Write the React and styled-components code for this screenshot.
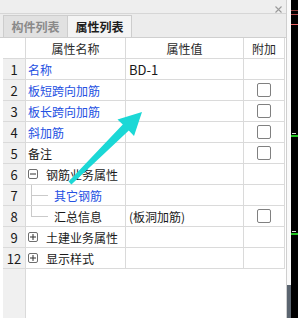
import React from "react";
import styled, { createGlobalStyle } from "styled-components";

const GlobalStyle = createGlobalStyle`
  * { box-sizing: border-box; }
  html, body { margin: 0; padding: 0; background: #fff; }
  body { font-family: "Noto Sans CJK SC", "Noto Sans", sans-serif; color: #1a1a1a; }
`;

const Screen = styled.div`
  position: relative;
  display: flex;
  width: 298px;
  height: 318px;
  overflow: hidden;
`;

const Panel = styled.div`
  width: 287px;
  border-right: 1px solid #cfcfcf;
  display: flex;
  flex-direction: column;
  background: #fff;
`;

const TitleBar = styled.div`
  height: 14px;
  border-bottom: 1px solid #d6d6d6;
  background: #eeeeee;
  display: flex;
  justify-content: flex-end;
  align-items: flex-start;
  padding: 6px 4px 0 0;
`;

const TabStrip = styled.div`
  height: 24px;
  background: #ececec;
  border-bottom: 1px solid #cfcfcf;
  padding: 1px 0 0 3px;
  display: flex;
`;

const Tab = styled.div`
  width: 65px;
  height: 22px;
  margin-left: ${(p) => (p.$active ? "-1px" : "0")};
  border: 1px solid #cdcdcd;
  border-bottom: none;
  background: ${(p) => (p.$active ? "#f4f4f4" : "#e1e1e1")};
  color: ${(p) => (p.$active ? "#1e1e1e" : "#8a8a8a")};
  font-size: 12px;
  font-weight: bold;
  display: flex;
  align-items: center;
  justify-content: center;
`;

const TableArea = styled.div`
  flex: 1;
  display: flex;
  flex-direction: column;
  padding-left: 3px;
`;

const Row = styled.div`
  display: grid;
  grid-template-columns: 23px 100px 118px 41px;
  height: 21px;
`;

const Cell = styled.div`
  border-right: 1px solid #dadada;
  border-bottom: 1px solid #dadada;
  display: flex;
  align-items: center;
  justify-content: ${(p) => (p.$center ? "center" : "flex-start")};
  padding-left: ${(p) => p.$pad || 0}px;
  background: ${(p) => (p.$gray ? "#f0f0f0" : "#fff")};
  color: ${(p) => (p.$blue ? "#2450e2" : "#1a1a1a")};
  font-size: ${(p) => p.$size || 12}px;
  white-space: nowrap;
  overflow: visible;
`;

const HeadCell = styled(Cell)`
  color: #2a2a2a;
`;

const Filler = styled.div`
  flex: 1;
  display: grid;
  grid-template-columns: 23px 1fr;
`;

const NumFill = styled.div`
  background: #f0f0f0;
  border-right: 1px solid #dadada;
`;

const Check = styled.span`
  width: 14px;
  height: 14px;
  border: 1px solid #808080;
  border-radius: 2px;
  background: #fff;
`;

const ToggleBox = styled.span`
  width: 10px;
  height: 10px;
  margin: 0 8px 0 1px;
  border: 1px solid #6e6e6e;
  border-radius: 2px;
  display: flex;
  align-items: center;
  justify-content: center;
  background: #fff;
`;

const Branch = styled.span`
  position: relative;
  width: 30px;
  height: 100%;
  margin-left: -2px;

  &::before {
    content: "";
    position: absolute;
    left: 7px;
    top: 0;
    width: 1px;
    height: ${(p) => (p.$last ? "50%" : "100%")};
    background: #cacaca;
  }
  &::after {
    content: "";
    position: absolute;
    left: 7px;
    top: 50%;
    width: 17px;
    height: 1px;
    background: #cacaca;
  }
`;

const ScrollTrack = styled.div`
  width: 4px;
  display: flex;
  flex-direction: column;
  justify-content: flex-end;
  background: #fafafa;
`;

const Thumb = styled.div`
  height: 33px;
  background: #5b6570;
`;

const DarkStrip = styled.div`
  width: 7px;
  background:
    linear-gradient(#8c3c3c, #8c3c3c) 0 10px / 100% 1px no-repeat,
    linear-gradient(#b04848, #b04848) 0 14px / 100% 1px no-repeat,
    linear-gradient(#f06464, #f06464) 0 24px / 100% 1px no-repeat,
    linear-gradient(#d8d8d8, #d8d8d8) 1px 133px / 4px 1px no-repeat,
    linear-gradient(#22c422, #22c422) 0 135px / 100% 2px no-repeat,
    linear-gradient(#d8d8d8, #d8d8d8) 1px 231px / 4px 1px no-repeat,
    linear-gradient(#22c422, #22c422) 0 233px / 100% 2px no-repeat,
    #000;
`;

const Overlay = styled.svg`
  position: absolute;
  left: 0;
  top: 0;
  pointer-events: none;
`;

const rows = [
  { no: 1, name: "名称", blue: true, value: "BD-1" },
  { no: 2, name: "板短跨向加筋", blue: true, check: true },
  { no: 3, name: "板长跨向加筋", blue: true, check: true },
  { no: 4, name: "斜加筋", blue: true, check: true },
  { no: 5, name: "备注", check: true },
  { no: 6, name: "钢筋业务属性", toggle: "minus" },
  { no: 7, name: "其它钢筋", blue: true, branch: "mid" },
  { no: 8, name: "汇总信息", branch: "last", value: "(板洞加筋)", check: true },
  { no: 9, name: "土建业务属性", toggle: "plus" },
  { no: 12, name: "显示样式", toggle: "plus" },
];

const Sign = ({ plus }) => (
  <svg width="6" height="6" viewBox="0 0 6 6">
    <line x1="0" y1="3" x2="6" y2="3" stroke="#333" strokeWidth="1" />
    {plus ? <line x1="3" y1="0" x2="3" y2="6" stroke="#333" strokeWidth="1" /> : null}
  </svg>
);

const NameCell = ({ row }) => {
  if (row.toggle) {
    return (
      <Cell $pad={1}>
        <ToggleBox>
          <Sign plus={row.toggle === "plus"} />
        </ToggleBox>
        {row.name}
      </Cell>
    );
  }
  if (row.branch) {
    return (
      <Cell $blue={row.blue}>
        <Branch $last={row.branch === "last"} />
        {row.name}
      </Cell>
    );
  }
  return (
    <Cell $pad={2} $blue={row.blue}>
      {row.name}
    </Cell>
  );
};

export default function App() {
  return (
    <>
      <GlobalStyle />
      <Screen>
        <Panel>
          <TitleBar>
            <svg width="7" height="7" viewBox="0 0 7 7">
              <path d="M0.5 0.5 L6.5 6.5 M6.5 0.5 L0.5 6.5" stroke="#9a9a9a" strokeWidth="1.1" />
            </svg>
          </TitleBar>
          <TabStrip>
            <Tab>构件列表</Tab>
            <Tab $active>属性列表</Tab>
          </TabStrip>
          <TableArea>
            <Row>
              <HeadCell />
              <HeadCell $center>属性名称</HeadCell>
              <HeadCell $center>属性值</HeadCell>
              <HeadCell $center>附加</HeadCell>
            </Row>
            {rows.map((row) => (
              <Row key={row.no}>
                <Cell $gray $center $size={13}>
                  {row.no}
                </Cell>
                <NameCell row={row} />
                <Cell $pad={3} $size={row.value === "BD-1" ? 13 : 12}>
                  {row.value}
                </Cell>
                <Cell $center>{row.check ? <Check /> : null}</Cell>
              </Row>
            ))}
            <Filler>
              <NumFill />
              <div />
            </Filler>
          </TableArea>
        </Panel>
        <ScrollTrack>
          <Thumb />
        </ScrollTrack>
        <DarkStrip />
        <Overlay width="298" height="318" viewBox="0 0 298 318">
          <polygon
            points="142,112 134,136 128.8,130.6 71.4,184.4 68.6,181.6 122.8,124.4 117.5,119.5"
            fill="#1bd8d6"
          />
        </Overlay>
      </Screen>
    </>
  );
}
